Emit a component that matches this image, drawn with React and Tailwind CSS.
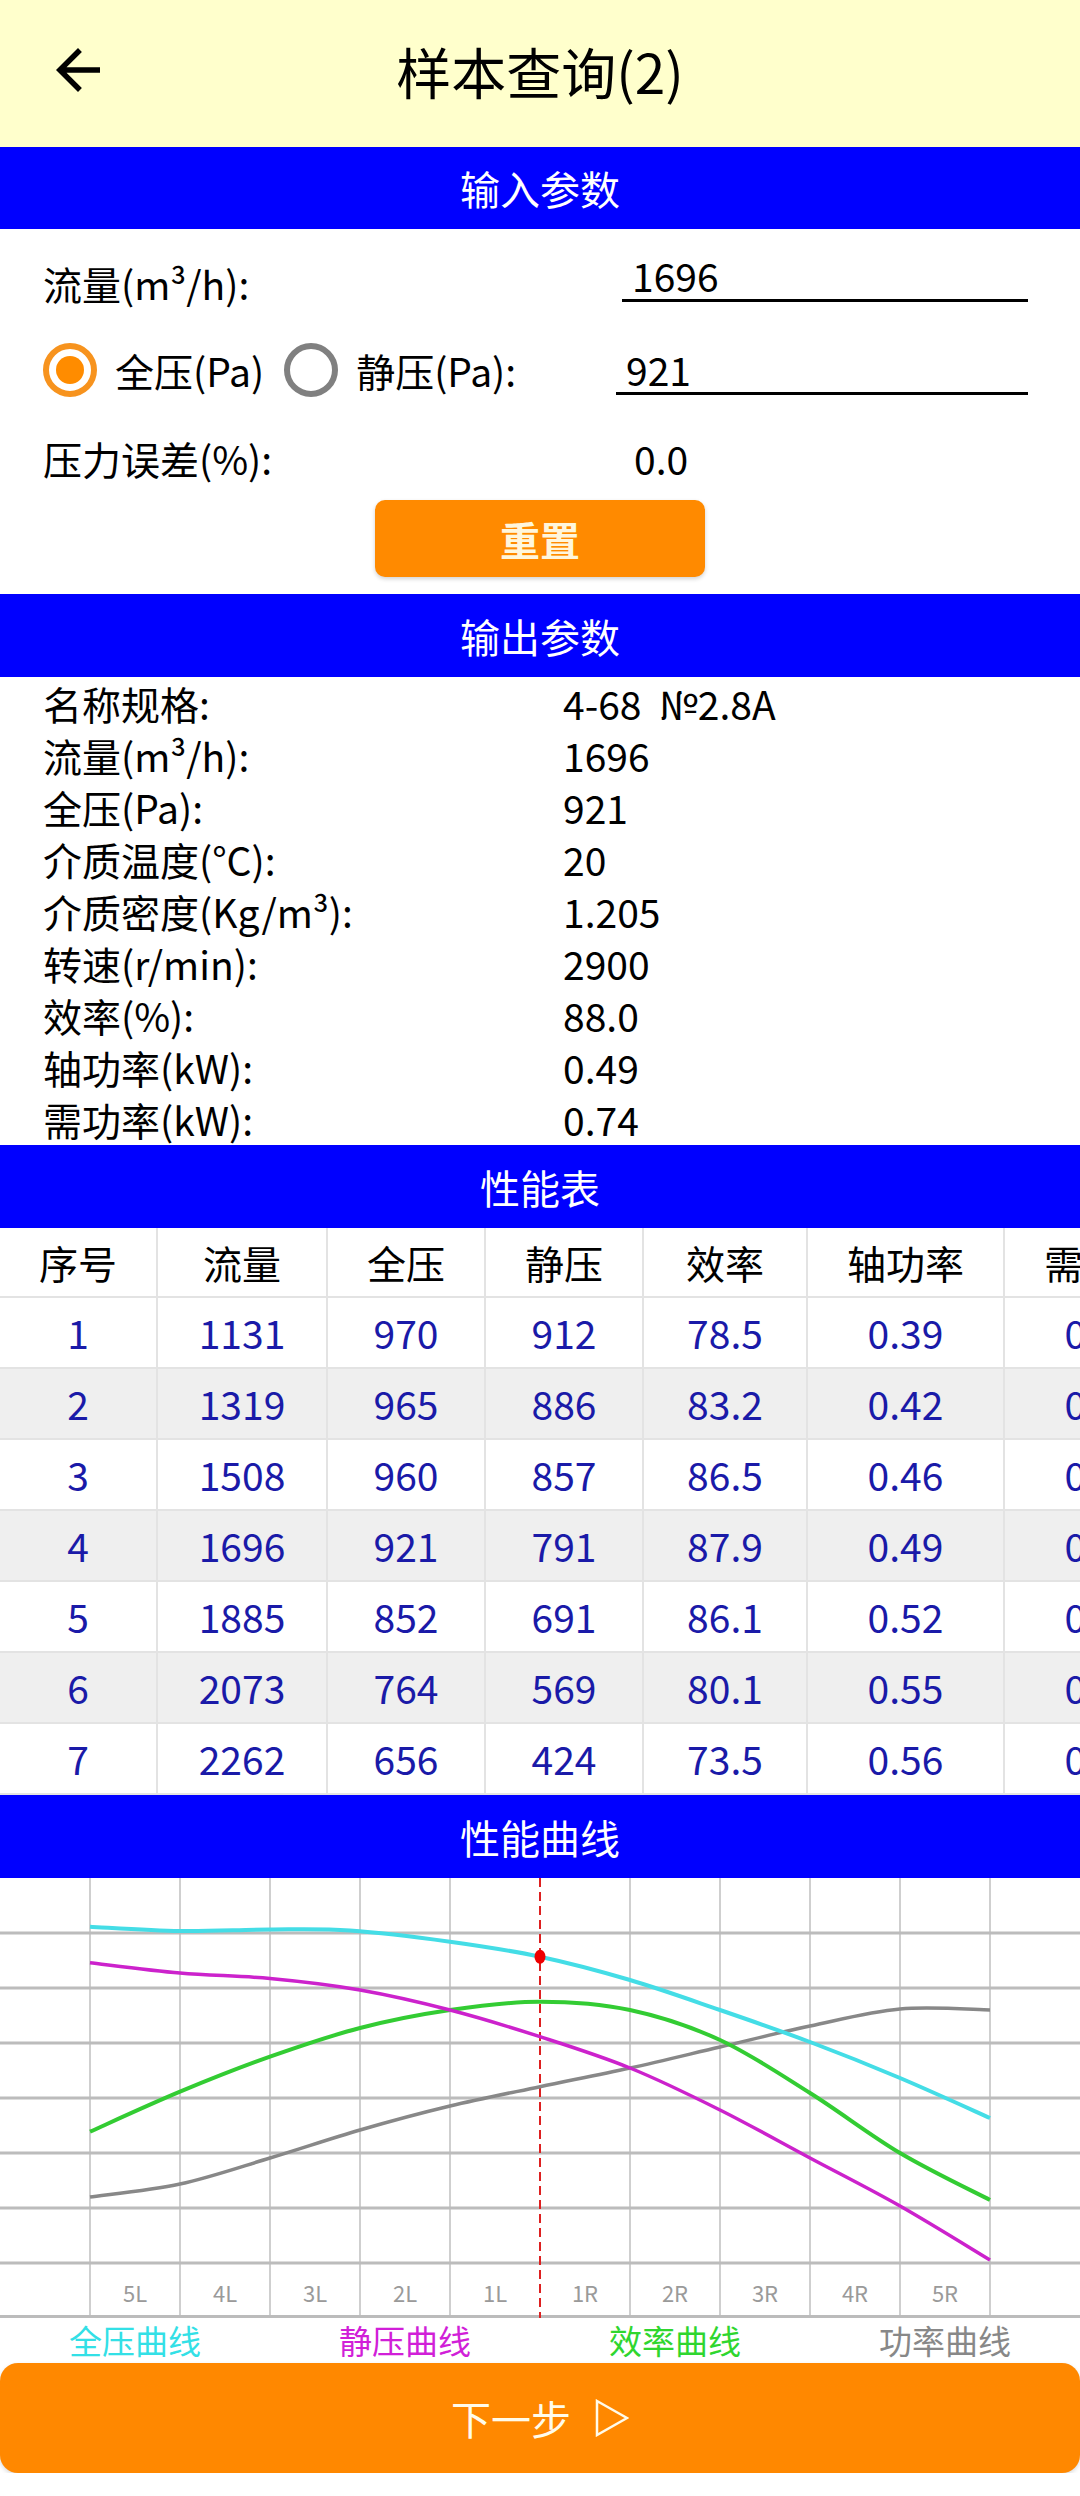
import React from "react";

const FONT = "font-['Noto_Sans_CJK_SC','Noto_Sans',sans-serif]";

function smooth(pts) {
  let d = `M${pts[0][0]},${pts[0][1]}`;
  for (let i = 0; i < pts.length - 1; i++) {
    const p0 = pts[i - 1] || pts[i];
    const p1 = pts[i];
    const p2 = pts[i + 1];
    const p3 = pts[i + 2] || p2;
    const c1x = p1[0] + (p2[0] - p0[0]) / 6;
    const c1y = p1[1] + (p2[1] - p0[1]) / 6;
    const c2x = p2[0] - (p3[0] - p1[0]) / 6;
    const c2y = p2[1] - (p3[1] - p1[1]) / 6;
    d += ` C${c1x.toFixed(1)},${c1y.toFixed(1)} ${c2x.toFixed(1)},${c2y.toFixed(1)} ${p2[0]},${p2[1]}`;
  }
  return d;
}

const cyan = [[90,48.7],[180,53],[270,51.5],[350,52.5],[450,63.7],[540,78.7],[630,102],[720,132],[810,164],[900,200],[990,240]];
const magenta = [[90,84.7],[180,95],[270,100.5],[360,112],[450,132],[540,158.7],[630,190],[720,232],[810,280],[900,328],[990,382]];
const green = [[90,253.7],[180,213.7],[270,178.7],[360,150],[450,132],[540,123.7],[630,132],[720,162],[810,215],[900,275],[990,322]];
const gray = [[90,319],[180,306],[270,280],[360,252],[450,228],[540,208.7],[630,190],[720,169],[810,148],[900,131],[990,132]];

const tableRows = [
  ["1", "1131", "970", "912", "78.5", "0.39", "0.59"],
  ["2", "1319", "965", "886", "83.2", "0.42", "0.63"],
  ["3", "1508", "960", "857", "86.5", "0.46", "0.69"],
  ["4", "1696", "921", "791", "87.9", "0.49", "0.74"],
  ["5", "1885", "852", "691", "86.1", "0.52", "0.78"],
  ["6", "2073", "764", "569", "80.1", "0.55", "0.83"],
  ["7", "2262", "656", "424", "73.5", "0.56", "0.84"],
];
const headers = ["序号", "流量", "全压", "静压", "效率", "轴功率", "需功率"];
const widths = ["w-[158px]", "w-[170px]", "w-[158px]", "w-[158px]", "w-[164px]", "w-[197px]", "w-[197px]"];

const outputRows = [
  ["名称规格:", "4-68  №2.8A"],
  ["流量(m³/h):", "1696"],
  ["全压(Pa):", "921"],
  ["介质温度(°C):", "20"],
  ["介质密度(Kg/m³):", "1.205"],
  ["转速(r/min):", "2900"],
  ["效率(%):", "88.0"],
  ["轴功率(kW):", "0.49"],
  ["需功率(kW):", "0.74"],
];

function BlueBar({ children }) {
  return (
    <div className="h-[83px] bg-[#0000ff] flex items-center justify-center text-white text-[40px] leading-none">
      {children}
    </div>
  );
}

function Chart() {
  const vlines = [90, 180, 270, 360, 450, 630, 720, 810, 900, 990];
  const hlines = [55, 110, 165, 220, 275, 330, 385, 438.5];
  const labels = ["5L", "4L", "3L", "2L", "1L", "1R", "2R", "3R", "4R", "5R"];
  return (
    <svg width="1080" height="440" viewBox="0 0 1080 440" className="block">
      {vlines.map((x) => (
        <line key={"v" + x} x1={x} y1="0" x2={x} y2="440" stroke="#cfcfcf" strokeWidth="2" />
      ))}
      {hlines.map((y) => (
        <line key={"h" + y} x1="0" y1={y} x2="1080" y2={y} stroke="#bcbcbc" strokeWidth="3" />
      ))}
      <line x1="540" y1="0" x2="540" y2="440" stroke="#dd2020" strokeWidth="2" strokeDasharray="9 5" />
      <path d={smooth(gray)} fill="none" stroke="#888888" strokeWidth="3.5" />
      <path d={smooth(green)} fill="none" stroke="#33cc33" strokeWidth="4" />
      <path d={smooth(magenta)} fill="none" stroke="#cc22cc" strokeWidth="3.5" />
      <path d={smooth(cyan)} fill="none" stroke="#44dde6" strokeWidth="4" />
      <ellipse cx="540" cy="78.7" rx="5.5" ry="7" fill="#ee0000" />
      {labels.map((t, i) => (
        <text
          key={t}
          x={135 + i * 90}
          y="424"
          textAnchor="middle"
          fontSize="22"
          fill="#9a9a9a"
          fontFamily="'Noto Sans CJK SC', 'Noto Sans', sans-serif"
        >
          {t}
        </text>
      ))}
    </svg>
  );
}

export default function App() {
  return (
    <div className={`${FONT} w-[1080px] bg-white text-black overflow-hidden`}>
      {/* Header */}
      <div className="relative h-[147px] bg-[#ffffcc] flex items-center justify-center">
        <svg className="absolute left-[45px] top-[37px]" width="66" height="66" viewBox="0 0 24 24">
          <path d="M20 11H7.83l5.59-5.59L12 4l-8 8 8 8 1.41-1.41L7.83 13H20v-2z" fill="#000" />
        </svg>
        <div className="text-[55px] leading-none pb-[6px]">样本查询(2)</div>
      </div>

      <div className="h-[82px] bg-[#0000ff] flex items-center justify-center text-white text-[40px] leading-none">
        输入参数
      </div>

      {/* Input section */}
      <div className="h-[365px] flex flex-col pt-[23px] text-[39px] leading-none">
        <div className="flex h-[62px] items-center pl-[43px] pr-[52px]">
          <span>流量(m³/h):</span>
          <div className="ml-auto w-[406px] h-[50px] mb-[12px] border-b-[3px] border-black flex items-center pl-[10px]">
            1696
          </div>
        </div>
        <div className="flex h-[62px] items-center pl-[43px] pr-[52px] mt-[25px]">
          <div className="w-[54px] h-[54px] rounded-full border-[6px] border-[#f7931e] flex items-center justify-center">
            <div className="w-[28px] h-[28px] rounded-full bg-[#ff8c00]" />
          </div>
          <span className="ml-[18px]">全压(Pa)</span>
          <div className="ml-[20px] w-[54px] h-[54px] rounded-full border-[6px] border-[#808080]" />
          <span className="ml-[18px]">静压(Pa):</span>
          <div className="ml-auto w-[412px] h-[48px] mt-[2px] border-b-[3px] border-black flex items-center pl-[10px]">
            921
          </div>
        </div>
        <div className="flex h-[62px] items-center pl-[43px] mt-[26px]">
          <span className="w-[591px]">压力误差(%):</span>
          <span>0.0</span>
        </div>
        <div className="mt-[11px] mx-auto w-[330px] h-[77px] rounded-[10px] bg-[#ff8a00] shadow-[0_2px_4px_rgba(0,0,0,0.18)] flex items-center justify-center text-[#fff6dc] text-[40px] font-bold">
          重置
        </div>
      </div>

      <BlueBar>输出参数</BlueBar>

      {/* Output section */}
      <div className="text-[39px] leading-none">
        {outputRows.map(([k, v]) => (
          <div key={k} className="flex h-[52px] items-center pl-[43px]">
            <span className="w-[520px] shrink-0">{k}</span>
            <span className="whitespace-pre">{v}</span>
          </div>
        ))}
      </div>

      <BlueBar>性能表</BlueBar>

      {/* Table */}
      <div className="w-[1080px] overflow-hidden text-[39px] leading-none">
        <div className="flex h-[70px] bg-white">
          {headers.map((h, i) => (
            <div
              key={h}
              className={`${widths[i]} shrink-0 h-full flex items-center justify-center border-r-2 border-b-2 border-[#e3e3e3] whitespace-nowrap`}
            >
              {h}
            </div>
          ))}
        </div>
        {tableRows.map((r, ri) => (
          <div key={ri} className={`flex h-[71px] ${ri % 2 === 1 ? "bg-[#efefef]" : "bg-white"}`}>
            {r.map((c, i) => (
              <div
                key={i}
                className={`${widths[i]} shrink-0 h-full flex items-center justify-center border-r-2 border-b-2 border-[#e3e3e3] text-[#1a1aa8]`}
              >
                {c}
              </div>
            ))}
          </div>
        ))}
      </div>

      <BlueBar>性能曲线</BlueBar>

      <Chart />

      {/* Legend */}
      <div className="flex h-[45px] items-center text-[33px] leading-none">
        <div className="flex-1 text-center text-[#33e0e6]">全压曲线</div>
        <div className="flex-1 text-center text-[#d11fd8]">静压曲线</div>
        <div className="flex-1 text-center text-[#2fd62f]">效率曲线</div>
        <div className="flex-1 text-center text-[#888888]">功率曲线</div>
      </div>

      {/* Next button */}
      <div className="h-[110px] rounded-[18px] bg-[#ff8800] shadow-[0_2px_4px_rgba(0,0,0,0.15)] flex items-center justify-center text-[#fffbea] text-[40px] leading-none">
        <span>下一步</span>
        <svg className="ml-[24px]" width="34" height="38" viewBox="0 0 34 38">
          <polygon points="2,2 32,19 2,36" fill="none" stroke="#fffbea" strokeWidth="2.5" strokeLinejoin="miter" />
        </svg>
      </div>
      <div className="h-[23px] bg-white" />
    </div>
  );
}
